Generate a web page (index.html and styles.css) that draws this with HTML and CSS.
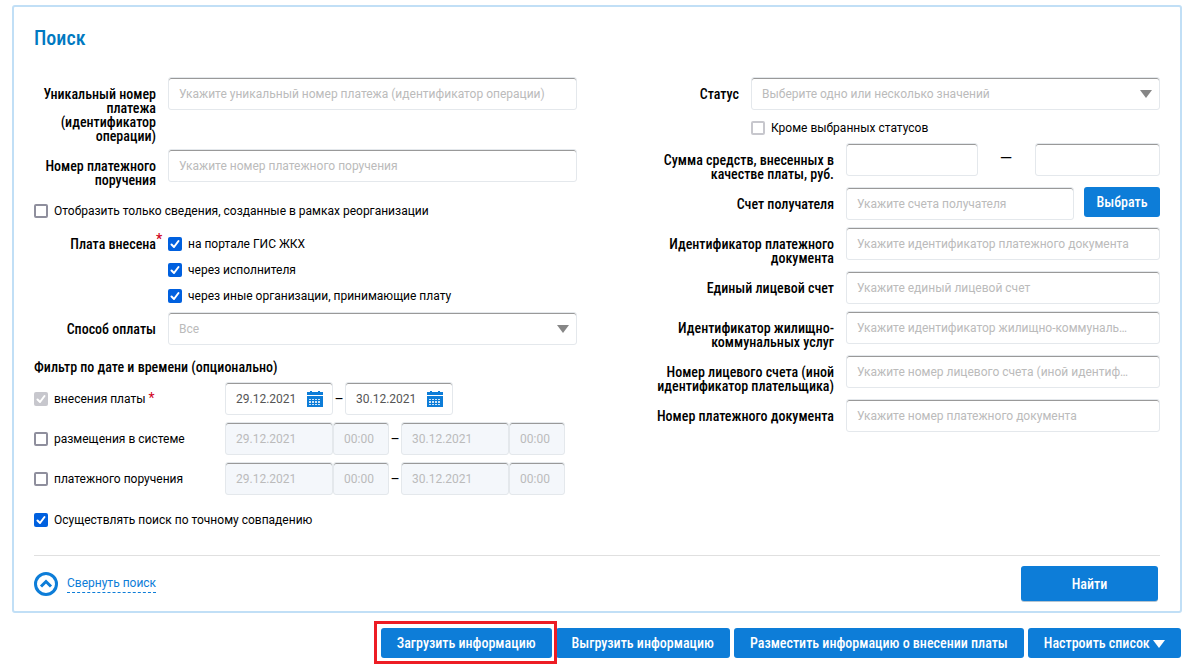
FILE: index.html
```html
<!DOCTYPE html>
<html lang="ru">
<head>
  <meta charset="UTF-8" />
  <meta name="viewport" content="width=device-width, initial-scale=1" />
  <title>Поиск платежей | ГИС ЖКХ</title>
  <link rel="stylesheet" href="styles.css">
</head>
<body>
  <form class="panel">
    <h1>Поиск</h1>

    <div class="columns">
      <div class="column">
        <div class="row">
          <label class="row-label" for="uniqueNumber">Уникальный номер платежа (идентификатор операции)</label>
          <input class="field" type="text" id="uniqueNumber" placeholder="Укажите уникальный номер платежа (идентификатор операции)" />
        </div>
        <div class="row">
          <label class="row-label" for="orderNumber">Номер платежного поручения</label>
          <input class="field" type="text" id="orderNumber" placeholder="Укажите номер платежного поручения" />
        </div>
        <label class="check check-row"><input type="checkbox" /> Отобразить только сведения, созданные в рамках реорганизации</label>

        <div class="row">
          <span class="row-label" id="paidLabel">Плата внесена<sup class="required">*</sup></span>
          <div class="checks" role="group" aria-labelledby="paidLabel">
            <label class="check"><input type="checkbox" checked /> на портале ГИС ЖКХ</label>
            <label class="check"><input type="checkbox" checked /> через исполнителя</label>
            <label class="check"><input type="checkbox" checked /> через иные организации, принимающие плату</label>
          </div>
        </div>
        <div class="row">
          <label class="row-label" for="payMethod">Способ оплаты</label>
          <select class="field" id="payMethod">
            <option>Все</option>
          </select>
        </div>

        <h2>Фильтр по дате и времени (опционально)</h2>
        <div class="row date-row">
          <label class="check"><input type="checkbox" checked disabled /> <span>внесения платы <span class="required">*</span></span></label>
          <div class="field date">
            <input type="text" value="29.12.2021" aria-label="Дата внесения платы с" />
            <button type="button" class="calendar" aria-label="Открыть календарь">
              <svg width="16" height="16" viewBox="0 0 16 16"><path fill="#0d7dd8" d="M3 0h2v1h6V0h2v1h3v3H0V1h3zM0 5h16v11H0z"/><path fill="#cfe5f7" d="M2 8h2v1H2zM5 8h2v1H5zM8 8h2v1H8zM11 8h2v1h-2zM2 10h2v2H2zM5 10h2v2H5zM8 10h2v2H8zM11 10h2v2h-2zM2 13h2v1H2zM5 13h2v1H5zM8 13h2v1H8zM11 13h2v1h-2z"/></svg>
            </button>
          </div>
          <span class="dash">–</span>
          <div class="field date">
            <input type="text" value="30.12.2021" aria-label="Дата внесения платы по" />
            <button type="button" class="calendar" aria-label="Открыть календарь">
              <svg width="16" height="16" viewBox="0 0 16 16"><path fill="#0d7dd8" d="M3 0h2v1h6V0h2v1h3v3H0V1h3zM0 5h16v11H0z"/><path fill="#cfe5f7" d="M2 8h2v1H2zM5 8h2v1H5zM8 8h2v1H8zM11 8h2v1h-2zM2 10h2v2H2zM5 10h2v2H5zM8 10h2v2H8zM11 10h2v2h-2zM2 13h2v1H2zM5 13h2v1H5zM8 13h2v1H8zM11 13h2v1h-2z"/></svg>
            </button>
          </div>
        </div>
        <div class="row date-row">
          <label class="check"><input type="checkbox" /> размещения в системе</label>
          <input class="field date" type="text" value="29.12.2021" aria-label="Дата размещения с" disabled />
          <input class="field time" type="text" value="00:00" aria-label="Время размещения с" disabled />
          <span class="dash">–</span>
          <input class="field date" type="text" value="30.12.2021" aria-label="Дата размещения по" disabled />
          <input class="field time" type="text" value="00:00" aria-label="Время размещения по" disabled />
        </div>
        <div class="row date-row">
          <label class="check"><input type="checkbox" /> платежного поручения</label>
          <input class="field date" type="text" value="29.12.2021" aria-label="Дата поручения с" disabled />
          <input class="field time" type="text" value="00:00" aria-label="Время поручения с" disabled />
          <span class="dash">–</span>
          <input class="field date" type="text" value="30.12.2021" aria-label="Дата поручения по" disabled />
          <input class="field time" type="text" value="00:00" aria-label="Время поручения по" disabled />
        </div>
        <label class="check check-row"><input type="checkbox" checked /> Осуществлять поиск по точному совпадению</label>
      </div>

      <div class="column">
        <div class="row">
          <label class="row-label" for="status">Статус</label>
          <select class="field" id="status">
            <option>Выберите одно или несколько значений</option>
          </select>
        </div>
        <div class="row except-row">
          <label class="check"><input type="checkbox" class="light" /> Кроме выбранных статусов</label>
        </div>
        <div class="row wide">
          <label class="row-label" for="sumFrom">Сумма средств, внесенных в качестве платы, руб.</label>
          <div class="range">
            <input class="field sum-from" type="text" id="sumFrom" />
            <span>—</span>
            <input class="field sum-to" type="text" aria-label="Сумма до" />
          </div>
        </div>
        <div class="row wide">
          <label class="row-label" for="account">Счет получателя</label>
          <div class="picker">
            <input class="field" type="text" id="account" placeholder="Укажите счета получателя" />
            <button type="button" class="btn">Выбрать</button>
          </div>
        </div>
        <div class="row wide">
          <label class="row-label" for="docId">Идентификатор платежного документа</label>
          <input class="field" type="text" id="docId" placeholder="Укажите идентификатор платежного документа" />
        </div>
        <div class="row wide">
          <label class="row-label" for="singleAccount">Единый лицевой счет</label>
          <input class="field" type="text" id="singleAccount" placeholder="Укажите единый лицевой счет" />
        </div>
        <div class="row wide">
          <label class="row-label" for="serviceId">Идентификатор жилищно-коммунальных услуг</label>
          <input class="field" type="text" id="serviceId" placeholder="Укажите идентификатор жилищно-коммунальных услуг" />
        </div>
        <div class="row wide">
          <label class="row-label" for="payerId">Номер лицевого счета (иной идентификатор плательщика)</label>
          <input class="field" type="text" id="payerId" placeholder="Укажите номер лицевого счета (иной идентификатор плательщика)" />
        </div>
        <div class="row wide">
          <label class="row-label" for="docNumber">Номер платежного документа</label>
          <input class="field" type="text" id="docNumber" placeholder="Укажите номер платежного документа" />
        </div>
      </div>
    </div>

    <div class="panel-footer">
      <a href="#" class="collapse">
        <svg width="26" height="26" viewBox="0 0 26 26" fill="none" stroke="#0d7dd8" stroke-width="3"><circle cx="12" cy="13" r="10.5"/><path d="M7 15.5l5-5 5 5"/></svg>
        <span>Свернуть поиск</span>
      </a>
      <button type="submit" class="btn btn-search">Найти</button>
    </div>
  </form>

  <div class="actions">
    <button type="button" class="btn marked">Загрузить информацию</button>
    <button type="button" class="btn">Выгрузить информацию</button>
    <button type="button" class="btn">Разместить информацию о внесении платы</button>
    <button type="button" class="btn">Настроить список <svg width="12" height="8" viewBox="0 0 12 8"><path fill="#fff" d="M0 0h12L6 8z"/></svg></button>
  </div>
</body>
</html>
```
FILE: styles.css
```css
* {
  box-sizing: border-box;
}
body {
  margin: 0;
  padding: 5px 15px 12px 12px;
  background: #fff;
  color: #000;
  font-family: Roboto, "Liberation Sans", sans-serif;
  font-size: 12px;
}
input,
select,
button {
  font: inherit;
  margin: 0;
}
h1,
h2,
.row-label,
.btn {
  font-family: "Roboto Condensed", "Liberation Sans Narrow", Roboto, sans-serif;
  font-weight: 500;
}
h1 {
  margin: 0 0 27px;
  font-size: 20px;
  line-height: 24px;
  color: #0079c1;
}
h2 {
  margin: 0;
  font-size: 14px;
  line-height: 30px;
}
.panel {
  padding: 19px 20px 0;
  border: 2px solid #c1dff6;
  border-radius: 3px;
}
.columns {
  display: grid;
  grid-template-columns: 1fr 1fr;
  gap: 40px;
}
.column {
  min-width: 0;
}
.row {
  display: flex;
  align-items: flex-start;
  gap: 12px;
  margin-bottom: 7px;
}
.row-label {
  position: relative;
  flex: none;
  width: 122px;
  padding-top: 10px;
  margin-bottom: -1px;
  font-size: 14px;
  line-height: 14px;
  text-align: right;
}
.wide .row-label {
  width: 217px;
  padding-left: 36px;
}
.required {
  color: #d0021b;
  font-size: 14px;
  line-height: 14px;
}
.row-label .required {
  position: absolute;
  left: 100%;
  top: 5px;
}

/* fields */
.field {
  flex: 1;
  min-width: 0;
  width: 100%;
  height: 33px;
  padding: 0 10px;
  border: 1px solid #e4e8ec;
  border-radius: 3px;
  background: #fff;
  box-shadow: inset 0 1px #999;
  color: #555;
  text-overflow: ellipsis;
}
.wide .field {
  padding-right: 28px;
}
.field::placeholder {
  color: #bbb;
  opacity: 1;
}
select.field {
  appearance: none;
  color: #bbb;
  background: #fff url("data:image/svg+xml,%3Csvg xmlns='http://www.w3.org/2000/svg' width='12' height='8'%3E%3Cpath fill='%23868686' d='M0 0h12L6 8z'/%3E%3C/svg%3E") no-repeat right 7px center;
}
.field:disabled {
  background: #f4f7fb;
  color: #bbb;
}
.field.date {
  flex: none;
  width: 108px;
}
.field.time {
  flex: none;
  width: 56px;
}
div.date {
  display: flex;
  align-items: center;
  padding-right: 9px;
}
.date input {
  flex: 1;
  min-width: 0;
  padding: 0;
  border: 0;
  background: none;
  color: #555;
}
.calendar {
  display: flex;
  padding: 0;
  border: 0;
  background: none;
  cursor: pointer;
}

/* checkboxes */
.check {
  display: flex;
  align-items: center;
  gap: 6px;
}
.check input {
  appearance: none;
  flex: none;
  width: 14px;
  height: 14px;
  border: 2px solid #8f8f9d;
  border-radius: 2px;
  background: #fff;
}
.check input.light {
  border-color: #c7c7cd;
}
.check input:checked {
  border: 0;
  background: #0060df url("data:image/svg+xml,%3Csvg xmlns='http://www.w3.org/2000/svg' width='14' height='14'%3E%3Cpath fill='none' stroke='%23fff' stroke-width='2' stroke-linecap='round' stroke-linejoin='round' d='M3.5 7.5l2.5 2.5 4.5-6'/%3E%3C/svg%3E");
}
.check input:checked:disabled {
  background-color: #c7c7cd;
}
.check-row {
  padding-top: 9px;
  margin-bottom: 7px;
  line-height: 18px;
}
.checks {
  padding-top: 4px;
  margin-bottom: -4px;
  line-height: 26px;
}
.except-row {
  padding-left: 134px;
  margin-bottom: 4px;
  line-height: 22px;
}
.date-row {
  align-items: center;
  gap: 0;
}
.date-row .check {
  flex: none;
  width: 191px;
}
.dash {
  flex: none;
  width: 12px;
  text-align: center;
  font-size: 14px;
}
.range,
.picker {
  display: flex;
  flex: 1;
  min-width: 0;
}
.range span {
  flex: none;
  width: 57px;
  font-size: 16px;
  line-height: 32px;
  text-align: center;
}
.sum-from {
  flex-grow: 15;
}
.sum-to {
  flex-grow: 14;
}
.picker {
  gap: 10px;
}

/* buttons */
.btn {
  height: 30px;
  padding: 0 16px;
  border: 0;
  border-radius: 3px;
  background: #0d7dd8;
  color: #fff;
  font-size: 14px;
  white-space: nowrap;
  cursor: pointer;
}
.picker .btn {
  flex: none;
  width: 76px;
  padding: 0;
}
.panel-footer {
  display: flex;
  align-items: center;
  justify-content: space-between;
  margin-top: 19px;
  padding: 10px 2px 10px 0;
  border-top: 1px solid #e0e0e0;
}
.collapse {
  display: flex;
  align-items: center;
  gap: 7px;
  color: #0d7dd8;
  text-decoration: none;
}
.collapse span {
  border-bottom: 1px dashed #0d7dd8;
  line-height: 18px;
}
.btn-search {
  width: 137px;
  height: 35px;
  box-shadow: 0 1px #b5c4d0;
}
.actions {
  display: flex;
  justify-content: flex-end;
  gap: 4px;
  padding: 15px 1px 0 0;
}
.marked {
  position: relative;
}
.marked::after {
  content: "";
  position: absolute;
  inset: -7px -5px -6px -7px;
  z-index: 1;
  border: 3px solid #ed1c24;
}
```
